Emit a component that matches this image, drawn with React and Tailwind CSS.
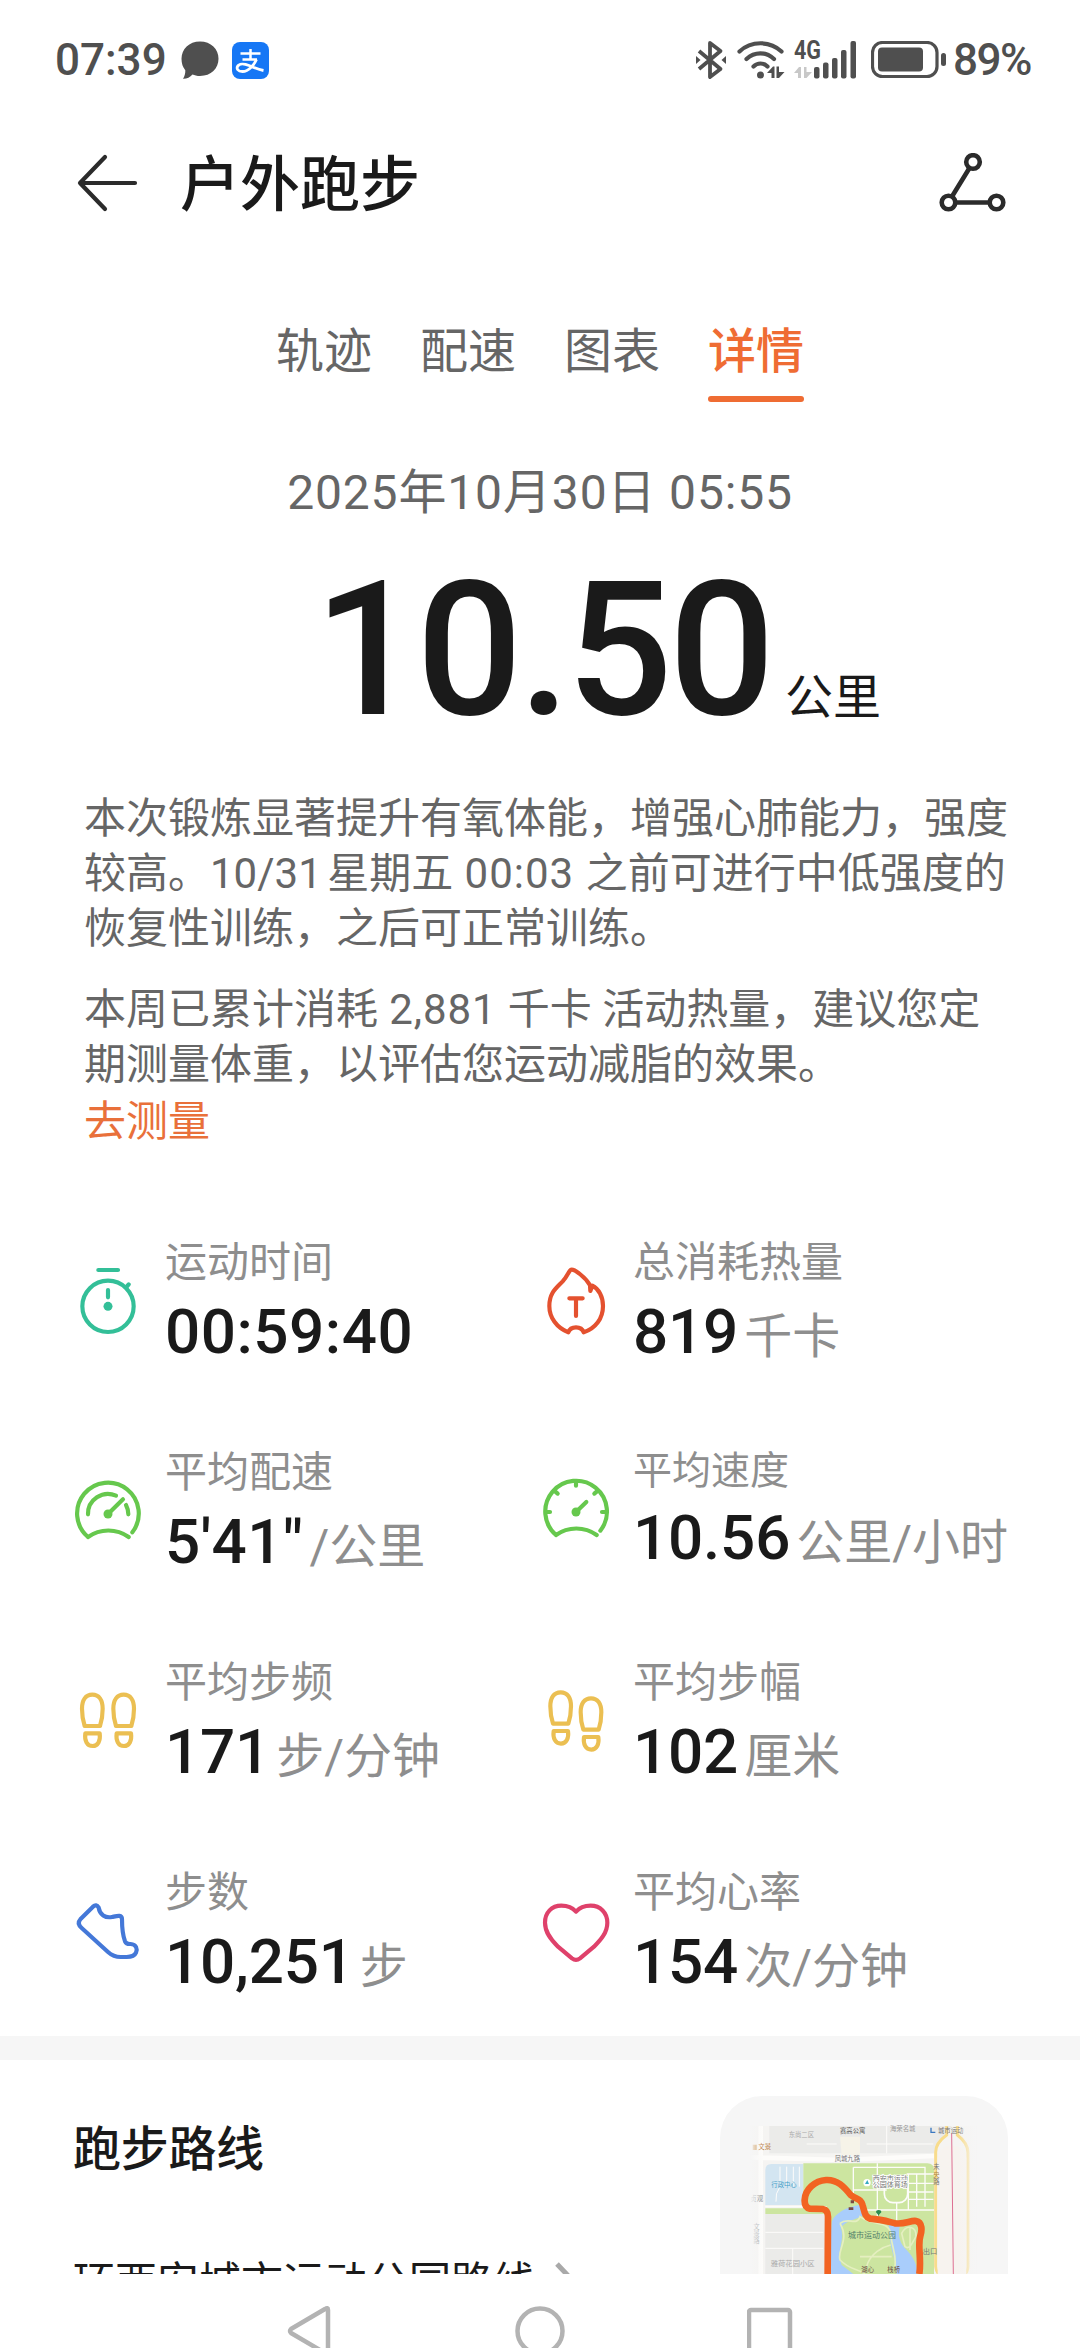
function StatusBar() {
  return (
    <div className="flex h-[120px] items-center pl-[55px] pr-[49px] text-[#4f4f4f]">
      <span className="text-[44px] font-medium leading-[60px]">07:39</span>
      <svg className="ml-[14px]" width="38" height="38" viewBox="0 0 38 38" fill="currentColor">
        <path d="M19 0.5C30 0.5 37.5 8 37.5 17.8S30 35 19 35c-3 0-5.500-.6-7.500-1.500C9 36.500 5.500 38 2 37.800c1.500-2.500 2.500-5.500 2.300-8.600C1.800 26.300.5 22.500.5 17.800.5 8 8 .5 19 .5Z" />
      </svg>
      <svg className="ml-[13px]" width="37" height="37" viewBox="0 0 37 37">
        <rect width="37" height="37" rx="8" fill="#1677f5" />
        <g fill="none" stroke="#fff">
          <path d="M8.500 11.500H28.500M18.500 7V17M10.500 17.500H25" strokeWidth="2.500" />
          <path d="M24.500 17.500C22.500 22 17 29.500 10.500 29.500C5.500 29.500 4.500 26.500 5.500 24.500C7 21.500 12 21.500 17 23.500C22 25.500 26 27.500 31.500 28.500" strokeWidth="2.800" />
        </g>
      </svg>
      <div className="ml-auto flex items-center">
        <svg width="30" height="40" viewBox="0 0 30 40" fill="none" stroke="currentColor" strokeWidth="3.800" strokeLinejoin="round">
          <path d="M3 11L24.500 29L14 37V3L24.500 11L3 29" />
          <path d="M0 16L4.500 20L0 24ZM30 16L25.500 20L30 24Z" fill="currentColor" stroke="none" />
        </svg>
        <svg className="ml-[11px]" width="48" height="38" viewBox="0 0 48 38" fill="none" stroke="currentColor" strokeWidth="4.200" strokeLinecap="round">
          <path d="M2.500 10.500C14-.5 33-.5 44.500 10.500M9.500 18C17.500 10.500 29 10.500 37 18M16.500 25.500C20.500 21.500 26.500 21.500 30.500 25.500" />
          <circle cx="23.500" cy="34" r="3.500" fill="currentColor" stroke="none" />
          <path d="M30 32L36 25.500H37.500V37H34.500V32ZM39.500 25.500H42V31H47.500L42 37H39.500Z" fill="currentColor" stroke="none" />
        </svg>
        <svg className="ml-[9px]" width="63" height="54" viewBox="0 -8 63 54" fill="currentColor">
          <text x="0" y="18" fontSize="25" fontWeight="700" textLength="27" lengthAdjust="spacingAndGlyphs" fontFamily="Roboto, sans-serif">4G</text>
          <path d="M0 32L5 26H7V37H4V32ZM10 26H12.500V31H18L12.500 37H10Z" fill="#c8c8c8" />
          <rect x="20" y="26" width="5.500" height="11.500" rx="2" />
          <rect x="29" y="21.500" width="5.500" height="16" rx="2" />
          <rect x="38" y="17" width="5.500" height="20.500" rx="2" />
          <rect x="47" y="9" width="5.500" height="28.500" rx="2" />
          <rect x="56.500" y="0" width="5.500" height="37.500" rx="2" />
        </svg>
        <svg className="ml-[14px]" width="76" height="38" viewBox="0 0 76 38">
          <rect x="1.500" y="1.500" width="64.500" height="34" rx="10" fill="none" stroke="currentColor" strokeWidth="3.200" />
          <rect x="7" y="6.500" width="45" height="24" rx="4" fill="currentColor" />
          <rect x="70" y="12" width="5" height="13" rx="2.500" fill="currentColor" />
        </svg>
        <span className="ml-[6px] text-[44px] font-medium leading-[60px] tracking-[-1.500px]">89%</span>
      </div>
    </div>
  );
}

function Header() {
  return (
    <div className="flex h-[126px] items-center pl-[77px] pr-[74px]">
      <svg width="62" height="58" viewBox="0 0 62 58" fill="none" stroke="#2b2b2b" strokeWidth="4.200" strokeLinecap="round" strokeLinejoin="round">
        <path d="M28 3L3 29L28 55M3 29H58" />
      </svg>
      <h1 className="ml-[41px] mt-[5px] text-[60px] font-medium leading-[72px] text-[#1a1a1a]">户外跑步</h1>
      <svg className="ml-auto" width="67" height="60" viewBox="0 0 67 60" fill="none" stroke="#2b2b2b" strokeWidth="4.600">
        <circle cx="34" cy="9" r="6.800" />
        <circle cx="9.500" cy="49.500" r="6.800" />
        <circle cx="57.500" cy="49.500" r="6.800" />
        <path d="M30.500 15L13 43.500M16 49.500H51" />
      </svg>
    </div>
  );
}

const tabs = ["轨迹", "配速", "图表", "详情"];

function Tabs() {
  return (
    <nav className="flex justify-center gap-[48px] pt-[76px] text-[48px] leading-[60px]">
      {tabs.map((t) => (
        <div key={t} className={t === "详情" ? "flex flex-col gap-[14px] font-medium text-[#ef6c33]" : "text-[#666666]"}>
          <span>{t}</span>
          {t === "详情" && <i className="block h-[6px] rounded-full bg-[#ef6c33]" />}
        </div>
      ))}
    </nav>
  );
}

function Summary() {
  return (
    <section>
      <p className="mt-[59px] text-center text-[48px] leading-[64px] tracking-[0.85px] text-[#666666]">2025年10月30日 05:55</p>
      <div className="mt-[34px] flex h-[200px] items-baseline pl-[314px] text-[#1a1a1a]">
        <span className="text-[187px] font-medium leading-[184px] tracking-[-4px]">10.50</span>
        <span className="ml-[14px] text-[48px] leading-[60px]">公里</span>
      </div>
      <div className="ml-[84px] mt-[32px] whitespace-nowrap text-[42px] leading-[55px] text-[#666666]">
        <p>本次锻炼显著提升有氧体能，增强心肺能力，强度</p>
        <p>较高。10/31<span className="tracking-[-5px]"> </span>星期五<span className="tracking-[1px]"> 00:03 </span>之前可进行中低强度的</p>
        <p>恢复性训练，之后可正常训练。</p>
        <p className="mt-[26px]">本周已累计消耗<span className="tracking-[0.9px]"> 2,881 </span>千卡 活动热量，建议您定</p>
        <p>期测量体重，以评估您运动减脂的效果。</p>
        <p className="mt-[2px] text-[#e9703a]">去测量</p>
      </div>
    </section>
  );
}

function StatIcon({ box, color, children }) {
  return (
    <svg className="shrink-0" width="72" height="137" viewBox={box} fill="none" stroke={color} strokeWidth="12.500" strokeLinecap="round" strokeLinejoin="round">
      {children}
    </svg>
  );
}

const TimerIcon = () => (
  <StatIcon box="36 39 216 411" color="#33bf98">
    <path d="M115 150H174M201 199L206 193M144 210V232" />
    <circle cx="144" cy="259" r="77" />
    <circle cx="144" cy="259" r="13.500" fill="#33bf98" stroke="none" />
  </StatIcon>
);

const FlameIcon = () => (
  <StatIcon box="60 39 216 411" color="#e4512f">
    <path d="M145 337C110 323 88 293 88 258C88 218 108 205 128 184C146 164 147 149 155 149C165 149 197 172 210 196L211 213L217 197C236 206 249 230 249 258C249 295 227 325 191 337C187 325 179 322 168 322C157 322 149 325 145 337Z" />
    <path d="M148 235H188M168 235V288" />
  </StatIcon>
);

const PaceIcon = () => (
  <StatIcon box="36 669 216 411" color="#66c84d">
    <path d="M84 951A92.500 92.500 0 1 1 217 937M84 951C120 925 170 925 206 951" />
    <path d="M84 883A60 60 0 0 1 168 827M198 855A60 60 0 0 1 205 883M144 882L189 838" />
    <circle cx="144" cy="882" r="13.500" fill="#66c84d" stroke="none" />
  </StatIcon>
);

const SpeedIcon = () => (
  <StatIcon box="60 669 216 411" color="#66c84d">
    <path d="M108 945A92.500 92.500 0 1 1 241 932M108 945C144 919 194 919 230 945" />
    <path d="M168 787V797M106 815L113 821M230 815L223 821M79 876H90M257 876H246M168 876L199 846" />
    <circle cx="168" cy="876" r="13.500" fill="#66c84d" stroke="none" />
  </StatIcon>
);

const Foot = ({ x, y }) => (
  <g transform={`translate(${x} ${y})`}>
    <path d="M74 258C69 243 66 226 66 206C66 180 77 164 97 164C117 164 128 180 128 206C128 226 125 243 120 258Z" />
    <path d="M76 280H119C122 302 114 318 98 318C81 318 73 302 76 280Z" />
  </g>
);

const CadenceIcon = () => (
  <StatIcon box="36 39 216 411" color="#ebbf52">
    <Foot x={0} y={0} />
    <Foot x={94} y={0} />
  </StatIcon>
);

const StrideIcon = () => (
  <StatIcon box="60 39 216 411" color="#ebbf52">
    <Foot x={25} y={-7} />
    <Foot x={116} y={11} />
  </StatIcon>
);

const ShoeIcon = () => (
  <StatIcon box="36 669 216 411" color="#4478d8">
    <path d="M61 838L99 800Q109 791 116 803C119 824 136 835 156 831C170 828 186 822 186 838C186 866 189 888 195 904Q199 913 212 912C229 913 233 927 228 938C223 950 210 951 200 951H182C166 951 155 946 144 936L65 864Q50 850 61 838Z" />
  </StatIcon>
);

const HeartIcon = () => (
  <StatIcon box="60 669 216 411" color="#df416b">
    <path d="M168 815C155 800 140 797 124 797C95 797 75 818 75 848C75 878 94 900 114 920L156 955Q168 964 180 955L222 920C242 900 262 878 262 848C262 818 241 797 212 797C196 797 181 800 168 815Z" />
  </StatIcon>
);

const stats = [
  { icon: TimerIcon, label: "运动时间", value: "00:59:40", unit: "", wide: true },
  { icon: FlameIcon, label: "总消耗热量", value: "819", unit: "千卡" },
  { icon: PaceIcon, label: "平均配速", value: "5'41\"", unit: "/公里", wide: true },
  { icon: SpeedIcon, label: "平均速度", value: "10.56", unit: "公里/小时", compact: true },
  { icon: CadenceIcon, label: "平均步频", value: "171", unit: "步/分钟" },
  { icon: StrideIcon, label: "平均步幅", value: "102", unit: "厘米" },
  { icon: ShoeIcon, label: "步数", value: "10,251", unit: "步" },
  { icon: HeartIcon, label: "平均心率", value: "154", unit: "次/分钟" },
];

function Stats() {
  return (
    <section className="mt-[84px] grid grid-cols-[468px_468px] gap-y-[73px] pl-[72px]">
      {stats.map(({ icon: Icon, label, value, unit, compact, wide }) => (
        <div key={label} className="flex h-[137px] gap-[21px] whitespace-nowrap">
          <Icon />
          <div>
            <div className={compact ? "h-[56px] text-[39px] leading-[56px] text-[#8e8e8e]" : "h-[60px] text-[42px] leading-[60px] text-[#8e8e8e]"}>{label}</div>
            <div className="flex h-[77px] items-baseline leading-[77px]">
              <span className={wide ? "text-[62px] font-medium tracking-[0.5px] text-[#1a1a1a]" : "text-[62px] font-medium tracking-[-0.2px] text-[#1a1a1a]"}>{value}</span>
              <span className="ml-[6px] text-[48px] text-[#8e8e8e]">{unit}</span>
            </div>
          </div>
        </div>
      ))}
    </section>
  );
}

function RouteMap() {
  return (
    <svg width="288" height="178" viewBox="240 228 864 534" fontFamily="'Noto Sans CJK SC', sans-serif">
      <defs>
        <linearGradient id="edge" x1="0" x2="1" y1="0" y2="0">
          <stop offset="0" stopColor="#f6f6f6" />
          <stop offset="0.06" stopColor="#f6f6f6" stopOpacity="0" />
          <stop offset="0.92" stopColor="#f6f6f6" stopOpacity="0" />
          <stop offset="1" stopColor="#f6f6f6" />
        </linearGradient>
      </defs>
      <rect x="330" y="318" width="680" height="444" fill="#f5f4f2" />
      <path d="M388 318H935L880 400H388ZM376 582H555V762H376Z" fill="#ebebe9" />
      <path d="M600 350H660V405H605Z" fill="#f6f3e8" />
      <path d="M376 450Q376 432 394 432H490V555H376Z" fill="#d3e5f1" />
      <path d="M490 430H862Q882 430 882 450V762H555V582H376V565H490Z" fill="#cce5a0" />
      <g fill="none" stroke="#fdfcfa">
        <path d="M330 412L600 420L882 408M362 318V762" strokeWidth="14" />
        <path d="M376 560H560M660 570H882M640 442V520M712 430V610M640 442H855V560M800 462H882M805 490H882M805 516H880M805 538H880M805 462V570M830 462V560M640 510H740M770 548V600" strokeWidth="4" />
        <path d="M420 440V500Q405 520 408 545M440 440V500M460 440V500M478 440V500M376 637H550M376 685H550M458 685V762M500 372H590M740 318V400M680 372H880" strokeWidth="3" />
        <rect x="733" y="482" width="70" height="66" rx="26" strokeWidth="5" />
      </g>
      <path d="M575 605C585 580 620 560 660 555L672 585C650 600 615 600 603 625C615 660 590 690 605 735L640 762H565Z" fill="#a9cdfb" />
      <path d="M745 610L780 615C772 650 780 670 800 690C820 710 835 740 830 762H770C770 720 750 690 750 650Z" fill="#a9cdfb" />
      <g fill="none" stroke="#e5efc0" strokeWidth="5">
        <path d="M600 610C625 590 650 620 660 590C700 620 745 600 752 640C756 690 770 700 765 740M600 610C630 660 590 690 600 720C630 750 650 745 675 762M680 740C690 700 730 680 752 675M660 710H755" />
        <path d="M785 640C800 610 830 620 828 650C815 670 810 690 795 680ZM810 620V690" />
      </g>
      <path d="M920 318V345Q885 370 887 400V740Q890 762 900 762M952 318V345Q985 370 984 400V740Q982 762 970 762" fill="none" stroke="#f8dc8c" strokeWidth="9" />
      <path d="M893 762V415Q897 380 936 376Q977 380 979 415V762Z" fill="#f7f3ef" />
      <path d="M935 340L940 762" stroke="#dd6f92" strokeWidth="3" />
      <path d="M563 762L564 590Q564 570 548 567L510 566Q493 562 494 540C495 508 525 482 558 480C592 478 612 500 632 525C650 540 663 535 668 556C674 578 675 590 690 596C725 598 745 605 765 610C795 614 812 600 828 603C848 607 846 632 841 648C832 675 845 715 838 762" fill="none" stroke="#f26322" strokeWidth="20" strokeLinejoin="round" />
      <g fontSize="19" fill="#777">
        <text x="446" y="352" fill="#aaa">东尚二区</text>
        <text x="600" y="340" fill="#555">赛高公寓</text>
        <text x="750" y="334" fill="#999">海荣名城</text>
        <text x="894" y="339">城市运动</text>
        <text x="584" y="423">凤城九路</text>
        <text x="355" y="388" fill="#b87838">文景</text>
        <text x="394" y="501" fill="#3e9cc6">行政中心</text>
        <g stroke="#fff" strokeWidth="5" paintOrder="stroke">
          <text x="698" y="482" fontSize="21">西安市运动</text>
          <text x="698" y="502" fontSize="21">公园体育场</text>
        </g>
        <text x="624" y="653" fontSize="24" fill="#52806b">城市运动公园</text>
        <text x="392" y="738" fontSize="22" fill="#aaa">雅荷花园小区</text>
        <text x="664" y="756" fill="#6c4b45">湖心</text>
        <text x="742" y="756" fill="#6c4b45">栈桥</text>
        <text x="848" y="702" fontSize="22">出口</text>
        <text x="331" y="542">贞观</text>
        <text x="340" y="628" fill="#999">文</text>
        <text x="340" y="648" fill="#999">景</text>
        <text x="340" y="668" fill="#999">路</text>
        <text x="880" y="448">未</text>
        <text x="880" y="470" fill="#b08a46">央</text>
        <text x="880" y="492">路</text>
      </g>
      <path d="M873 323V337H886" stroke="#3b78c0" strokeWidth="4" fill="none" />
      <path d="M338 374H350V390H338Z" fill="#c98b3f" />
      <circle cx="681" cy="488" r="11" fill="#fff" />
      <path d="M675 492L682 480L687 492Z" fill="#35a9c4" />
      <path d="M632 541H642V550H632ZM626 562H640V570H626Z" fill="#7a4a44" />
      <path d="M708 577A8 7 0 1 1 724 577Q716 583 716 588Q714 583 708 577Z" fill="#2c8a50" />
      <rect x="330" y="318" width="680" height="444" fill="url(#edge)" />
    </svg>
  );
}

function RouteSection() {
  return (
    <section className="flex h-[214px] justify-between overflow-hidden pl-[73px] pr-[72px] pt-[36px]">
      <div className="whitespace-nowrap text-[#1a1a1a]">
        <h2 className="mt-[24px] text-[48px] font-medium leading-[60px] tracking-[-0.3px]">跑步路线</h2>
        <div className="mt-[73px] flex h-[60px] items-center text-[42px] leading-[60px]">
          <span>环西安城市运动公园路线</span>
          <svg className="ml-[20px]" width="24" height="42" viewBox="0 0 24 42" fill="none" stroke="#a9a9a9" strokeWidth="5">
            <path d="M2 2L20 21L2 40" />
          </svg>
        </div>
      </div>
      <div className="h-[288px] w-[288px] overflow-hidden rounded-[42px] bg-[#f6f6f6]">
        <RouteMap />
      </div>
    </section>
  );
}

function NavBar() {
  return (
    <div className="flex h-[74px] items-start justify-center gap-[182px] overflow-hidden bg-white pt-[31px]">
      <svg width="46" height="52" viewBox="0 0 46 52" fill="none" stroke="#b3b3b3" strokeWidth="4.500" strokeLinejoin="round">
        <path d="M41 5Q41 2 38 4L4 24Q2 26 4 28L38 48Q41 50 41 47Z" />
      </svg>
      <svg width="50" height="52" viewBox="0 0 50 52" fill="none" stroke="#b3b3b3" strokeWidth="4.500">
        <circle cx="25" cy="26" r="22.500" />
      </svg>
      <svg width="46" height="52" viewBox="0 0 46 52" fill="none" stroke="#b3b3b3" strokeWidth="4.500">
        <rect x="2" y="5" width="41" height="41" rx="2" />
      </svg>
    </div>
  );
}

export default function App() {
  return (
    <main className="h-[2348px] w-[1080px] overflow-hidden bg-white font-['Roboto','Noto_Sans_CJK_SC',sans-serif]">
      <StatusBar />
      <Header />
      <Tabs />
      <Summary />
      <Stats />
      <div className="mt-[36px] h-[24px] bg-[#f6f6f6]" />
      <RouteSection />
      <NavBar />
    </main>
  );
}
